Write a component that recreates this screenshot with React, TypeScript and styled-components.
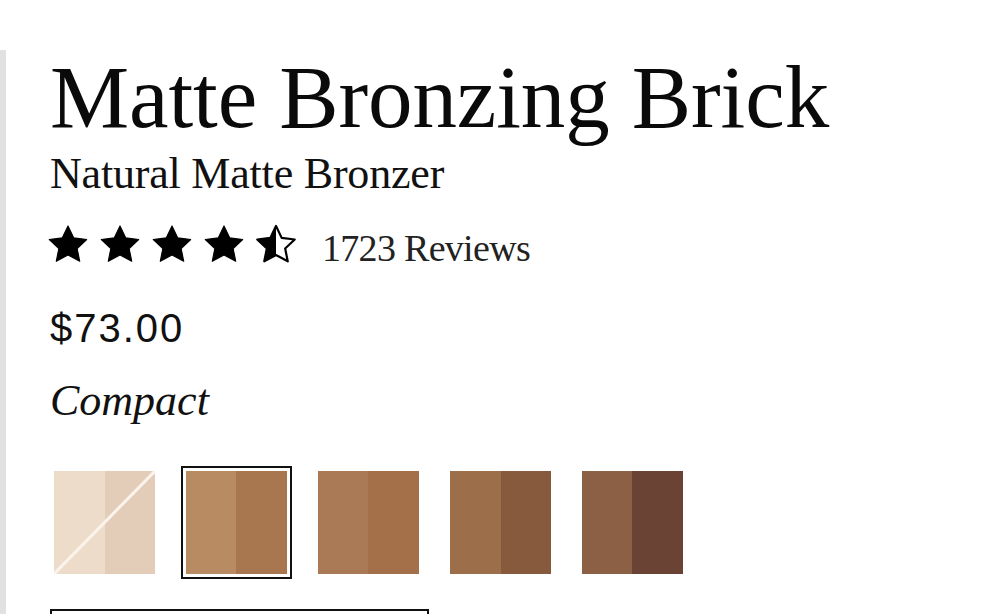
import React from "react";
import styled, { createGlobalStyle } from "styled-components";

const GlobalStyle = createGlobalStyle`
  html, body { margin: 0; padding: 0; background: #ffffff; }
  body { width: 1000px; height: 614px; overflow: hidden; }
`;

const Page = styled.div`
  padding-top: 50px;
  height: 564px;
`;

const Panel = styled.section`
  border-left: 6px solid #e1e1e1;
  height: 564px;
  padding-left: 44px;
  box-sizing: border-box;
  display: flex;
  flex-direction: column;
  color: #111;
`;

const Title = styled.h1`
  margin: -3px 0 0;
  font-family: "Liberation Serif", "Times New Roman", serif;
  font-weight: 400;
  font-size: 89px;
  line-height: 100px;
  letter-spacing: -0.1px;
  color: #0a0a0a;
  white-space: nowrap;
`;

const Subtitle = styled.h2`
  margin: 3px 0 0;
  font-family: "Liberation Serif", "Times New Roman", serif;
  font-weight: 400;
  font-size: 44px;
  line-height: 48px;
  letter-spacing: -0.2px;
  color: #111;
`;

const RatingRow = styled.div`
  margin-top: 24px;
  display: flex;
  align-items: center;
  height: 46px;
`;

const Stars = styled.div`
  display: flex;
  gap: 8px;
  margin-left: -4px;
`;

const ReviewCount = styled.span`
  margin-left: 24px;
  font-family: "Liberation Serif", "Times New Roman", serif;
  font-size: 38px;
  letter-spacing: -0.7px;
  line-height: 46px;
  color: #222;
  position: relative;
  top: 3px;
`;

const Price = styled.div`
  margin-top: 38px;
  font-family: "Liberation Sans", Arial, sans-serif;
  font-size: 40px;
  letter-spacing: 2px;
  line-height: 44px;
  color: #111;
`;

const Variant = styled.div`
  margin-top: 27px;
  font-family: "Liberation Serif", "Times New Roman", serif;
  font-style: italic;
  font-size: 44px;
  line-height: 48px;
  color: #111;
`;

const SwatchRow = styled.div`
  margin-top: 41px;
  display: flex;
  align-items: center;
  gap: 21px;
  margin-left: -1px;
`;

const SwatchFrame = styled.button<{ $selected?: boolean }>`
  appearance: none;
  margin: 0;
  padding: 3px;
  background: #fff;
  border: 2px solid ${(p) => (p.$selected ? "#111" : "transparent")};
  cursor: pointer;
  display: block;
`;

const Swatch = styled.div<{ $left: string; $right: string }>`
  position: relative;
  width: 101px;
  height: 103px;
  background: linear-gradient(
    to right,
    ${(p) => p.$left} 0,
    ${(p) => p.$left} 50%,
    ${(p) => p.$right} 50%,
    ${(p) => p.$right} 100%
  );
  overflow: hidden;
`;

const Strike = styled.svg`
  position: absolute;
  inset: 0;
`;

const AddButton = styled.div`
  margin-top: 30px;
  width: 379px;
  height: 60px;
  border: 2px solid #111;
  box-sizing: border-box;
  flex-shrink: 0;
`;

const STAR =
  "12,1.6 15.1,8.1 22.2,9 17,13.9 18.4,20.9 12,17.5 5.6,20.9 7,13.9 1.8,9 8.9,8.1";

const Star: React.FC<{ kind: "full" | "half" }> = ({ kind }) => (
  <svg width="44" height="44" viewBox="0 0 24 24">
    <defs>
      <clipPath id="halfclip">
        <rect x="0" y="0" width="12" height="24" />
      </clipPath>
    </defs>
    {kind === "full" ? (
      <polygon points={STAR} fill="#000" stroke="#000" strokeWidth="0.6" strokeLinejoin="round" />
    ) : (
      <>
        <polygon points={STAR} fill="#000" clipPath="url(#halfclip)" />
        <polygon points={STAR} fill="none" stroke="#000" strokeWidth="1.2" strokeLinejoin="round" />
      </>
    )}
  </svg>
);

const shades = [
  { left: "#eedcca", right: "#e3ccb8", unavailable: true },
  { left: "#b88b62", right: "#a87750", selected: true },
  { left: "#a97a55", right: "#a3704a" },
  { left: "#9d6e4a", right: "#875a3e" },
  { left: "#8c6044", right: "#6b4334" },
];

export default function App() {
  return (
    <>
      <GlobalStyle />
      <Page>
        <Panel>
          <Title>Matte Bronzing Brick</Title>
          <Subtitle>Natural Matte Bronzer</Subtitle>
          <RatingRow>
            <Stars>
              <Star kind="full" />
              <Star kind="full" />
              <Star kind="full" />
              <Star kind="full" />
              <Star kind="half" />
            </Stars>
            <ReviewCount>1723 Reviews</ReviewCount>
          </RatingRow>
          <Price>$73.00</Price>
          <Variant>Compact</Variant>
          <SwatchRow>
            {shades.map((s, i) => (
              <SwatchFrame key={i} $selected={s.selected} aria-label={`Shade ${i + 1}`}>
                <Swatch $left={s.left} $right={s.right}>
                  {s.unavailable && (
                    <Strike width="101" height="103" viewBox="0 0 101 103">
                      <line x1="0" y1="103" x2="101" y2="0" stroke="#fbf4ec" strokeWidth="3" />
                    </Strike>
                  )}
                </Swatch>
              </SwatchFrame>
            ))}
          </SwatchRow>
          <AddButton />
        </Panel>
      </Page>
    </>
  );
}
